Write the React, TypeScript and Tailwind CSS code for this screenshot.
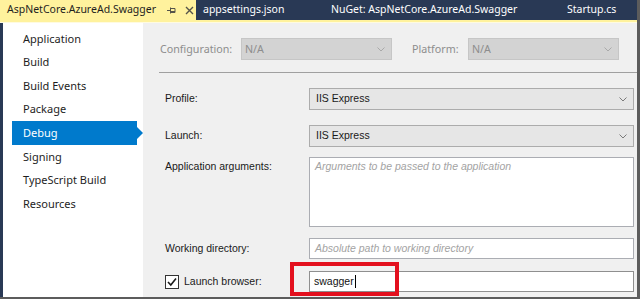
import React from "react";

const ui = { fontFamily: '"Segoe UI", "Noto Sans", sans-serif' };
const wf = { fontFamily: '"Liberation Sans", Arial, sans-serif' };

function Chevron({ color = "#7a7a7a" }: { color?: string }) {
  return (
    <svg width="8" height="5" viewBox="0 0 8 5" className="shrink-0">
      <path d="M0.5 0.5 L4 4 L7.5 0.5" fill="none" stroke={color} strokeWidth="1" />
    </svg>
  );
}

function Combo({ text, disabled = false, width }: { text: string; disabled?: boolean; width?: string }) {
  if (disabled) {
    return (
      <div
        className={`${width ?? ""} h-[22px] flex items-center justify-between border border-[#c6c6c6] bg-[#d3d3d3] pl-[3px] pr-[6px] text-[10.7px] text-[#8d8d8d]`}
        style={ui}
      >
        <span>{text}</span>
        <Chevron color="#a9a9a9" />
      </div>
    );
  }
  return (
    <div
      className="flex-1 h-[22px] flex items-center justify-between border border-[#acacac] bg-[#e6e6e6] pl-[6px] pr-[6px] text-[10.5px] text-[#1a1a1a]"
      style={wf}
    >
      <span>{text}</span>
      <Chevron />
    </div>
  );
}

const navItems = ["Application", "Build", "Build Events", "Package", "Debug", "Signing", "TypeScript Build", "Resources"];

export default function App() {
  return (
    <div className="relative w-[644px] h-[302px] bg-white overflow-hidden">
      <div className="w-[640px] h-[299px] flex flex-col border-r-[3px] border-b-[2px] border-[#5c5c5c] bg-[#293955]">
        {/* Tab bar */}
        <div className="h-[20px] flex items-stretch text-[10.5px]" style={ui}>
          <div className="w-[196px] bg-[#fff29d] flex items-center pl-[7px] text-[#1e1e1e]">
            <span>AspNetCore.AzureAd.Swagger</span>
            <svg width="9" height="9" viewBox="0 0 9 9" className="ml-[11px]">
              <path d="M0 4.5 H3 M3.5 1.5 V7.5 M3.5 2.5 H8 V6.5 H3.5 M3.5 5.5 H8" fill="none" stroke="#55544a" strokeWidth="1" />
            </svg>
            <svg width="9" height="9" viewBox="0 0 9 9" className="ml-[9px]">
              <path d="M1 1 L8 8 M8 1 L1 8" fill="none" stroke="#55544a" strokeWidth="1.4" />
            </svg>
          </div>
          <div className="w-[128px] flex items-center pl-[7px] text-white">appsettings.json</div>
          <div className="w-[236px] flex items-center pl-[7px] text-white">NuGet: AspNetCore.AzureAd.Swagger</div>
          <div className="flex-1 flex items-center pl-[7px] text-white">Startup.cs</div>
        </div>
        <div className="h-[3px] bg-[#fff29d] border-b border-[#fffbe0]" />
        {/* Body */}
        <div className="flex-1 flex pl-[3px]">
          {/* Sidebar */}
          <div className="w-[140px] bg-white pt-[4px] flex flex-col" style={ui}>
            {navItems.map((item) => {
              const sel = item === "Debug";
              return (
                <div
                  key={item}
                  className={`relative ml-[9px] w-[125px] h-[23.6px] flex items-center pl-[11px] text-[11px] ${
                    sel ? "bg-[#007acc] text-white" : "text-[#1e1e1e]"
                  }`}
                >
                  {item}
                  {sel && (
                    <svg width="7" height="12" viewBox="0 0 7 12" className="absolute left-[125px] top-[6px]">
                      <path d="M0 0 L6 6 L0 12 Z" fill="#007acc" />
                    </svg>
                  )}
                </div>
              );
            })}
          </div>
          {/* Panel */}
          <div className="flex-1 bg-[#f0f0f0] pt-[15px] flex flex-col">
            <div className="flex items-center pl-[17px] h-[22px]">
              <span className="w-[81px] text-[10.7px] text-[#8d8d8d]" style={ui}>
                Configuration:
              </span>
              <Combo text="N/A" disabled width="w-[151px]" />
              <span className="ml-[20px] w-[56px] text-[10.7px] text-[#8d8d8d]" style={ui}>
                Platform:
              </span>
              <Combo text="N/A" disabled width="w-[151px]" />
            </div>
            <div className="mt-[12px] ml-[16px] h-[1px] bg-[#a0a0a0]" />
            <div className="flex flex-col pl-[22px] pr-[3px] text-[10.5px] text-[#1a1a1a]" style={wf}>
              <div className="mt-[15px] flex items-center">
                <span className="w-[144px]">Profile:</span>
                <Combo text="IIS Express" />
              </div>
              <div className="mt-[15px] flex items-center">
                <span className="w-[144px]">Launch:</span>
                <Combo text="IIS Express" />
              </div>
              <div className="mt-[10px] flex items-start">
                <span className="w-[144px] pt-[2px]">Application arguments:</span>
                <div className="flex-1 h-[70px] bg-white border border-[#abadb3] pl-[5px] pt-[1px] italic text-[#a3a3a3]">
                  Arguments to be passed to the application
                </div>
              </div>
              <div className="mt-[11px] flex items-center">
                <span className="w-[144px]">Working directory:</span>
                <div className="flex-1 h-[21px] flex items-center bg-white border border-[#abadb3] pl-[5px] italic text-[#a3a3a3]">
                  Absolute path to working directory
                </div>
              </div>
              <div className="mt-[12px] flex items-center">
                <div className="w-[144px] flex items-center">
                  <svg width="14" height="14" viewBox="0 0 14 14" className="shrink-0">
                    <rect x="0.5" y="0.5" width="13" height="13" fill="white" stroke="#333333" />
                    <path d="M3 7 L5.8 10 L11 3.5" fill="none" stroke="#1a1a1a" strokeWidth="1.6" />
                  </svg>
                  <span className="ml-[5px]">Launch browser:</span>
                </div>
                <div className="flex-1 h-[21px] flex items-center bg-white border border-[#8f8f8f] pl-[4px] text-[#111]">
                  swagger
                  <span className="inline-block w-[1px] h-[13px] bg-black ml-[1px]" />
                </div>
              </div>
            </div>
          </div>
        </div>
      </div>
      {/* Red highlight */}
      <div className="absolute left-[290px] top-[262px] w-[109px] h-[34px] border-[4px] border-[#e3101e]" />
    </div>
  );
}
